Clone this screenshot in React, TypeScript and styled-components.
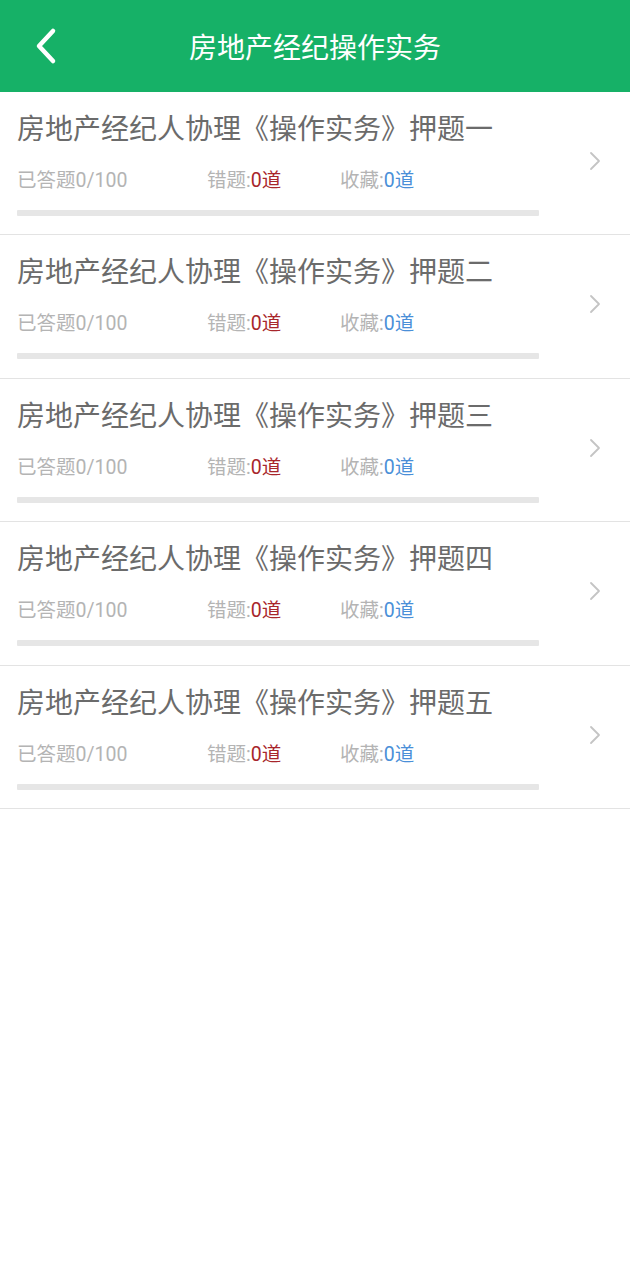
import * as React from 'react'
import styled, { createGlobalStyle } from 'styled-components'

const GlobalStyle = createGlobalStyle`
  body {
    margin: 0;
    background: #ffffff;
    font-family: Roboto, "Noto Sans CJK SC", sans-serif;
  }
`

const Page = styled.div`
  width: 630px;
  min-height: 1280px;
  background: #ffffff;
`

const Header = styled.header`
  height: 92px;
  background: #16b167;
  display: flex;
  align-items: center;
  justify-content: center;
  position: relative;
`

const BackButton = styled.div`
  position: absolute;
  left: 30px;
  top: 26px;
  width: 32px;
  height: 40px;
  display: flex;
  align-items: center;
  justify-content: center;
`

const HeaderTitle = styled.h1`
  margin: 0;
  font-size: 28px;
  font-weight: 400;
  color: #ffffff;
`

const List = styled.ul`
  list-style: none;
  margin: 0;
  padding: 0;
`

const Item = styled.li`
  display: flex;
  align-items: center;
  padding: 20px 0 18.4px 17px;
  border-bottom: 1px solid #e3e3e3;
`

const Body = styled.div`
  width: 522px;
`

const Title = styled.div`
  font-size: 28px;
  line-height: 36px;
  color: #6b6b6b;
`

const Stats = styled.div`
  display: flex;
  margin-top: 20px;
  font-size: 19.5px;
  line-height: 26px;
  color: #b4b4b4;
`

const Stat = styled.span<{ $width?: number }>`
  width: ${p => (p.$width ? `${p.$width}px` : 'auto')};
`

const Count = styled.span<{ $tone: 'red' | 'blue' }>`
  color: ${p => (p.$tone === 'red' ? '#a8262b' : '#4a8fd8')};
`

const Track = styled.div`
  margin-top: 16px;
  height: 6px;
  background: #e6e6e6;
  border-radius: 1px;
`

const Arrow = styled.div`
  margin-left: 50px;
  margin-top: -6px;
  display: flex;
`

const names = ['一', '二', '三', '四', '五']

export default function App() {
  return (
    <Page>
      <GlobalStyle />
      <Header>
        <BackButton>
          <svg width="24" height="38" viewBox="0 0 24 38">
            <path d="M19 4 L5 19 L19 34" fill="none" stroke="#fff" strokeWidth="4.5" strokeLinecap="round" strokeLinejoin="round" />
          </svg>
        </BackButton>
        <HeaderTitle>房地产经纪操作实务</HeaderTitle>
      </Header>
      <List>
        {names.map(n => (
          <Item key={n}>
            <Body>
              <Title>房地产经纪人协理《操作实务》押题{n}</Title>
              <Stats>
                <Stat $width={190}>已答题0/100</Stat>
                <Stat $width={133}>
                  错题:<Count $tone="red">0道</Count>
                </Stat>
                <Stat>
                  收藏:<Count $tone="blue">0道</Count>
                </Stat>
              </Stats>
              <Track />
            </Body>
            <Arrow>
              <svg width="12" height="20" viewBox="0 0 12 20">
                <path d="M2 2 L10 10 L2 18" fill="none" stroke="#c4c4c4" strokeWidth="1.8" strokeLinecap="round" strokeLinejoin="round" />
              </svg>
            </Arrow>
          </Item>
        ))}
      </List>
    </Page>
  )
}
